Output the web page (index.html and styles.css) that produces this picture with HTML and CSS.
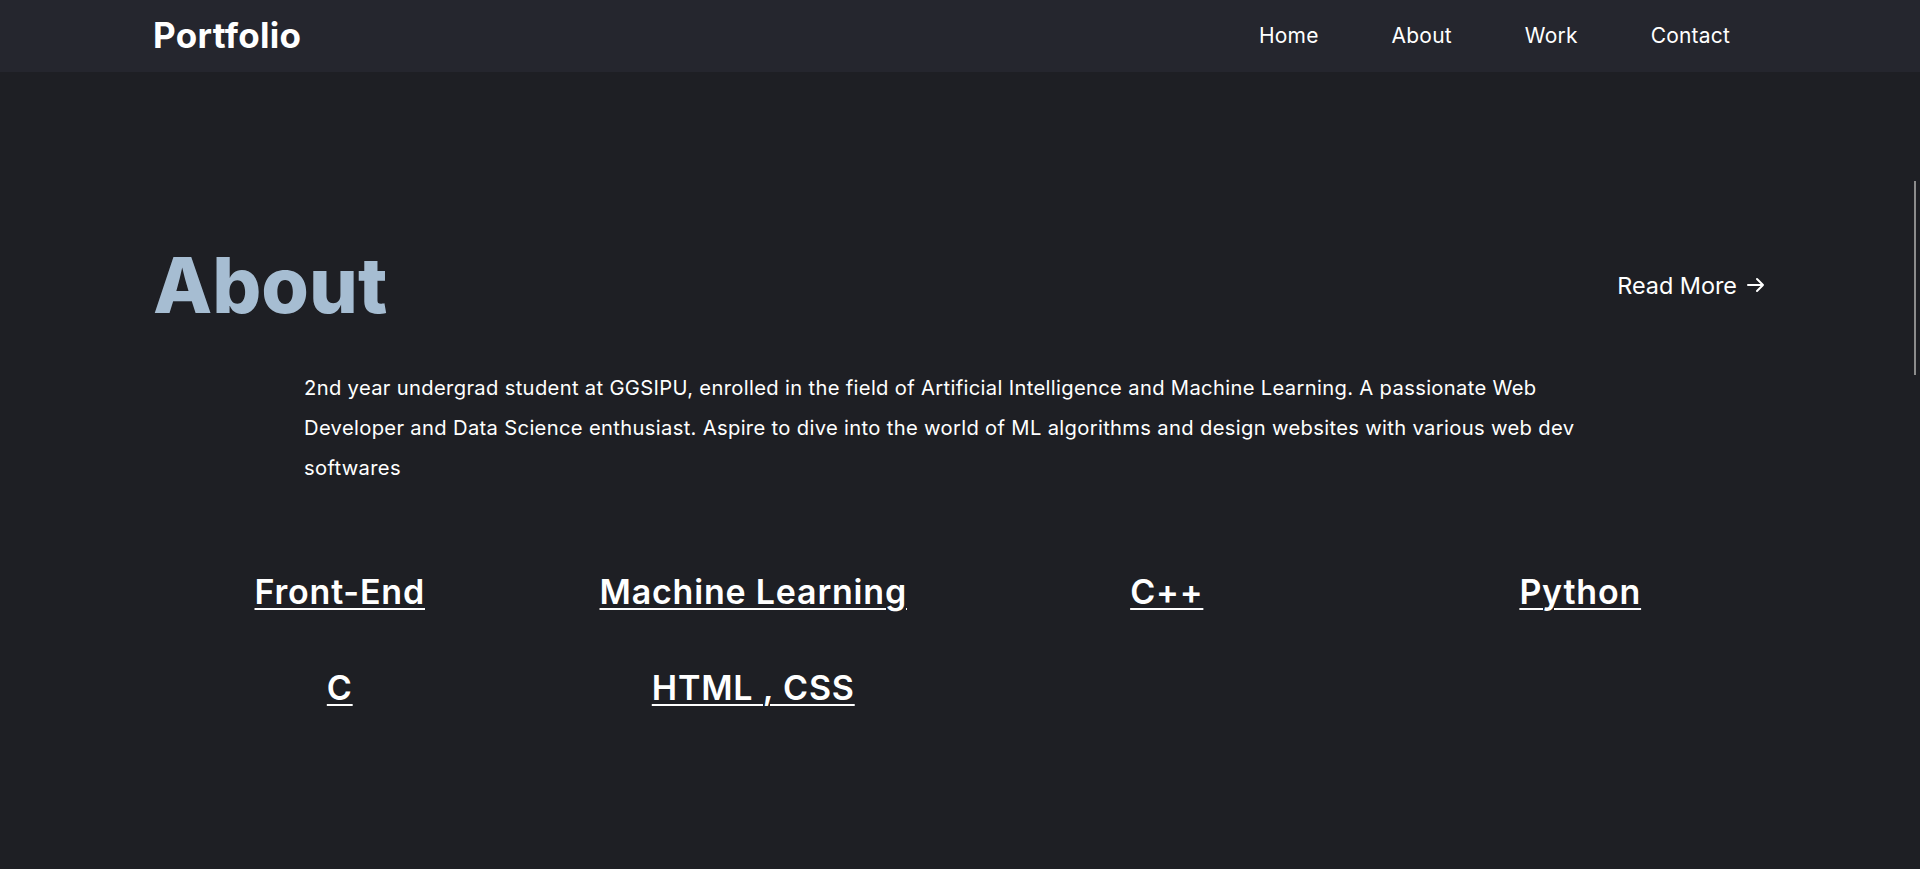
FILE: index.html
```html
<!DOCTYPE html>
<html lang="en">
<head>
<meta charset="utf-8">
<title>Portfolio</title>
<link rel="stylesheet" href="styles.css">
</head>
<body>
<header class="navbar">
  <a class="brand" href="#">Portfolio</a>
  <nav class="nav-links">
    <a href="#">Home</a>
    <a href="#">About</a>
    <a href="#">Work</a>
    <a href="#">Contact</a>
  </nav>
</header>
<main class="about">
  <div class="about-head">
    <h1 class="about-title">About</h1>
    <a class="read-more" href="#">Read More
      <svg class="arrow" viewBox="0 0 18 16" width="18" height="16" aria-hidden="true"><path d="M1 8h15M10 2l6 6-6 6" fill="none" stroke="#fff" stroke-width="2" stroke-linecap="round" stroke-linejoin="round"/></svg>
    </a>
  </div>
  <p class="about-text">2nd year undergrad student at GGSIPU, enrolled in the field of Artificial Intelligence and Machine Learning. A passionate Web Developer and Data Science enthusiast. Aspire to dive into the world of ML algorithms and design websites with various web dev softwares</p>
  <ul class="skills">
    <li><a href="#">Front-End</a></li>
    <li><a href="#">Machine Learning</a></li>
    <li><a href="#">C++</a></li>
    <li><a href="#">Python</a></li>
    <li><a href="#">C</a></li>
    <li><a href="#">HTML , CSS</a></li>
  </ul>
</main>
<div class="scroll-thumb"></div>
</body>
</html>
```
FILE: styles.css
```css
* { box-sizing: border-box; }
html, body { margin: 0; padding: 0; }
body {
  background: #1e1f24;
  color: #fff;
  font-family: "Inter", "Open Sans", sans-serif;
  height: 869px;
  overflow: hidden;
}
a { color: #fff; }
.navbar {
  height: 72px;
  background: #25262e;
  display: flex;
  align-items: center;
  justify-content: space-between;
  padding: 0 190px 2px 153px;
}
.brand {
  font-size: 35px;
  font-weight: 700;
  text-decoration: none;
  letter-spacing: 0.3px;
}
.nav-links {
  display: flex;
  gap: 73px;
}
.nav-links a {
  font-size: 21px;
  letter-spacing: 0.2px;
  text-decoration: none;
}
.about {
  padding: 0 155px 0 153px;
}
.about-head {
  display: flex;
  align-items: center;
  justify-content: space-between;
  height: 140px;
  margin-top: 143px;
}
.about-title {
  margin: 0;
  font-size: 77px;
  font-weight: 800;
  color: #a6bdd2;
  letter-spacing: 0;
  line-height: 1;
}
.read-more {
  display: flex;
  align-items: center;
  gap: 10px;
  font-size: 23.4px;
  text-decoration: none;
}
.about-text {
  margin: 13px 0 0 151px;
  width: 1300px;
  font-size: 20.2px;
  letter-spacing: 0.33px;
  line-height: 40px;
}
.skills {
  list-style: none;
  margin: 82px -22px 0 -20px;
  padding: 0;
  display: grid;
  grid-template-columns: repeat(4, 1fr);
  row-gap: 52px;
  text-align: center;
}
.skills a {
  font-size: 34px;
  font-weight: 600;
  letter-spacing: 0.8px;
  line-height: 44px;
  text-decoration: underline;
  text-underline-offset: 4px;
  text-decoration-thickness: 2px;
}
.scroll-thumb {
  position: fixed;
  right: 4px;
  top: 181px;
  width: 2px;
  height: 194px;
  background: #8c8c8c;
}
```
